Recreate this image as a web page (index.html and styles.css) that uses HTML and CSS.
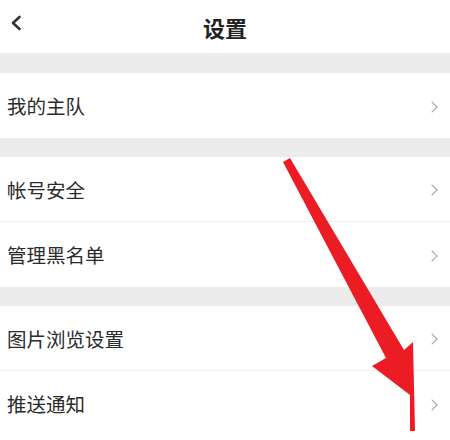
FILE: index.html
```html
<!DOCTYPE html>
<html lang="zh-CN">
<head>
    <meta charset="UTF-8">
    <meta name="viewport" content="width=device-width, initial-scale=1.0">
    <title>设置</title>
    <link rel="stylesheet" href="styles.css">
</head>
<body>
    <div class="page">
        <div class="header">
            <svg class="back" width="12" height="16" viewBox="0 0 12 16">
                <path d="M9.5 2 L3 8 L9.5 14" fill="none" stroke="#333" stroke-width="2.6" stroke-linecap="round" stroke-linejoin="round"/>
            </svg>
            <h1>设置</h1>
        </div>

        <div class="group">
            <div class="row"><span>我的主队</span><i class="arrow"></i></div>
        </div>

        <div class="group">
            <div class="row"><span>帐号安全</span><i class="arrow"></i></div>
            <div class="row"><span>管理黑名单</span><i class="arrow"></i></div>
        </div>

        <div class="group">
            <div class="row"><span>图片浏览设置</span><i class="arrow"></i></div>
            <div class="row"><span>推送通知</span><i class="arrow"></i></div>
        </div>
        <div class="tail"></div>

        <!-- 红色标注箭头 -->
        <svg class="mark" width="450" height="440" viewBox="0 0 450 440">
            <polygon points="283,162 290,158 404,350 413,342 415,431 410,431 410,395 372,366 386,358" fill="#ec1c24"/>
        </svg>
    </div>
</body>
</html>
```

FILE: styles.css
```css
body {
    margin: 0;
    padding: 0;
    background-color: #ececec;
    font-family: "Noto Sans CJK SC", "Noto Sans", sans-serif;
}
.page {
    position: relative;
    width: 450px;
    height: 440px;
    overflow: hidden;
}
.header {
    height: 53px;
    background-color: #fff;
    display: flex;
    align-items: center;
    justify-content: center;
    position: relative;
}
.header h1 {
    margin: 0;
    font-size: 22px;
    font-weight: 700;
    color: #222;
}
.back {
    position: absolute;
    left: 10px;
    top: 15px;
}
.group {
    margin-top: 20px;
    background-color: #fff;
}
.group + .group {
    margin-top: 19px;
}
.row {
    height: 64px;
    display: flex;
    align-items: center;
    justify-content: space-between;
    padding: 0 14px 0 7px;
    border-bottom: 1px solid #f0f0f0;
    font-size: 19.5px;
    color: #2b2b2b;
}
.row:last-child {
    height: 65px;
    border-bottom: none;
}
.group:last-of-type .row:last-child {
    height: 62px;
    border-bottom: 1px solid #ebebeb;
}
.tail {
    height: 20px;
    background-color: #fff;
}
.arrow {
    width: 7px;
    height: 7px;
    border-top: 1.5px solid #a0a0a0;
    border-right: 1.5px solid #a0a0a0;
    transform: rotate(45deg);
    margin-top: 2px;
}
.mark {
    position: absolute;
    left: 0;
    top: 0;
}
```
